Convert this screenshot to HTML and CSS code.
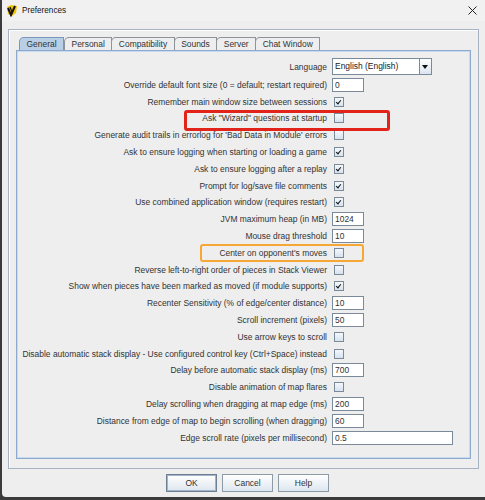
FILE: index.html
```html
<!DOCTYPE html>
<html lang="en">
<head>
    <meta charset="UTF-8">
    <title>Preferences</title>
    <link rel="stylesheet" href="styles.css">
</head>
<body>
    <div class="window">
        <div class="titlebar">
            <svg class="app-icon" width="12" height="13" viewBox="0 0 12 13">
                <path d="M1 3 L5 1 L11 2 L10 9 L6 12 L2 10 Z" fill="#f2c400"/>
                <path d="M2 4 L5 11 L9 2" fill="none" stroke="#111" stroke-width="2"/>
                <path d="M4 3 L6 8" stroke="#111" stroke-width="1.2"/>
            </svg>
            <span class="title">Preferences</span>
            <svg class="close" width="9" height="9" viewBox="0 0 9 9">
                <path d="M0.5 0.5 L8.5 8.5 M8.5 0.5 L0.5 8.5" stroke="#222" stroke-width="1"/>
            </svg>
        </div>

        <div class="dialog">
            <div class="etched">
                <div class="tabs">
                    <div class="tab selected">General</div>
                    <div class="tab">Personal</div>
                    <div class="tab">Compatibility</div>
                    <div class="tab">Sounds</div>
                    <div class="tab">Server</div>
                    <div class="tab">Chat Window</div>
                </div>
                <div class="tab-body">
                    <div class="prefs">
                        <label>Language</label>
                        <div class="combo">
                            <span class="combo-text">English (English)</span>
                            <span class="combo-arrow"></span>
                        </div>

                        <label>Override default font size (0 = default; restart required)</label>
                        <input type="text" class="field" value="0">

                        <label>Remember main window size between sessions</label>
                        <span class="check on"></span>

                        <label>Ask "Wizard" questions at startup</label>
                        <span class="check"></span>

                        <label>Generate audit trails in errorlog for 'Bad Data in Module' errors</label>
                        <span class="check"></span>

                        <label>Ask to ensure logging when starting or loading a game</label>
                        <span class="check on"></span>

                        <label>Ask to ensure logging after a replay</label>
                        <span class="check on"></span>

                        <label>Prompt for log/save file comments</label>
                        <span class="check on"></span>

                        <label>Use combined application window (requires restart)</label>
                        <span class="check on"></span>

                        <label>JVM maximum heap (in MB)</label>
                        <input type="text" class="field" value="1024">

                        <label>Mouse drag threshold</label>
                        <input type="text" class="field" value="10">

                        <label>Center on opponent's moves</label>
                        <span class="check"></span>

                        <label>Reverse left-to-right order of pieces in Stack Viewer</label>
                        <span class="check"></span>

                        <label>Show when pieces have been marked as moved (if module supports)</label>
                        <span class="check on"></span>

                        <label>Recenter Sensitivity (% of edge/center distance)</label>
                        <input type="text" class="field" value="10">

                        <label>Scroll increment (pixels)</label>
                        <input type="text" class="field" value="50">

                        <label>Use arrow keys to scroll</label>
                        <span class="check"></span>

                        <label>Disable automatic stack display - Use configured control key (Ctrl+Space) instead</label>
                        <span class="check"></span>

                        <label>Delay before automatic stack display (ms)</label>
                        <input type="text" class="field" value="700">

                        <label>Disable animation of map flares</label>
                        <span class="check"></span>

                        <label>Delay scrolling when dragging at map edge (ms)</label>
                        <input type="text" class="field" value="200">

                        <label>Distance from edge of map to begin scrolling (when dragging)</label>
                        <input type="text" class="field" value="60">

                        <label>Edge scroll rate (pixels per millisecond)</label>
                        <input type="text" class="field wide" value="0.5">
                    </div>

                    <!-- marker outlines drawn over the rows -->
                    <div class="mark mark-red"></div>
                    <div class="mark mark-orange"></div>
                </div>
            </div>

            <div class="buttons">
                <button class="btn default">OK</button>
                <button class="btn">Cancel</button>
                <button class="btn">Help</button>
            </div>
        </div>
    </div>
</body>
</html>
```

FILE: styles.css
```css
body {
    margin: 0;
    background-color: #3b3b3b;
    font-family: "Liberation Sans", Arial, sans-serif;
    font-size: 8.45px;
    color: #333;
}
.window {
    margin-left: 2px;
    width: 483px;
    height: 497px;
    background-color: #eeeeee;
    border-bottom-left-radius: 4px;
    overflow: hidden;
}
.titlebar {
    height: 21px;
    display: flex;
    align-items: center;
    background-color: #f1f1f1;
    padding-left: 4px;
}
.app-icon {
    margin-right: 4px;
}
.title {
    font-size: 8.2px;
    color: #111;
    flex: 1;
}
.close {
    margin-right: 8px;
}
.dialog {
    padding: 8px 6px 0 6px;
}
.etched {
    border: 1px solid #a7b3c2;
    box-shadow: inset 1px 1px 0 #fff;
    padding: 7px 7px 14px 7px;
    height: 417px;
}
.tabs {
    display: flex;
    margin-left: 3px;
    height: 13px;
}
.tab {
    border: 1px solid #8e9399;
    border-bottom: none;
    border-top-left-radius: 5px;
    padding: 0 6.5px;
    line-height: 12px;
    background-color: #eeeeee;
}
.tab + .tab {
    margin-left: -1px;
}
.tab.selected {
    background-color: #b8cfe5;
    border-color: #7b95bb;
    margin-right: 1px;
}
.tab-body {
    position: relative;
    border: 1px solid #8ea9cf;
    box-shadow: inset 0 0 0 1px #c9daee;
    height: 401px;
    padding: 6px 17px 0 0;
}
.prefs {
    display: grid;
    grid-template-columns: 1fr 121px;
    grid-template-rows: 19.5px;
    grid-auto-rows: 16.8px;
    column-gap: 5px;
    align-items: center;
}
.prefs label {
    text-align: right;
    white-space: nowrap;
}
.field {
    box-sizing: border-box;
    width: 32px;
    height: 14px;
    margin: 0;
    padding: 0 2px;
    border: 1px solid #7a8a99;
    background: #fff;
    font-family: inherit;
    font-size: 8.45px;
    color: #333;
}
.field.wide {
    width: 121px;
}
.check {
    box-sizing: border-box;
    width: 10px;
    height: 10px;
    margin-left: 2px;
    border: 1px solid #7a8a99;
    background: linear-gradient(#f4f8fc, #d6e2ef);
    position: relative;
}
.check.on::after {
    content: "";
    position: absolute;
    left: 2px;
    top: 1px;
    width: 2px;
    height: 4px;
    border: solid #111;
    border-width: 0 1.5px 1.5px 0;
    transform: rotate(40deg);
}
.combo {
    box-sizing: border-box;
    width: 100px;
    height: 17px;
    display: flex;
    border: 1px solid #7a8a99;
    background: #fff;
}
.combo-text {
    flex: 1;
    padding-left: 2px;
    line-height: 15px;
    color: #222;
}
.combo-arrow {
    width: 11px;
    border-left: 1px solid #7a8a99;
    background: linear-gradient(#fdfeff, #dbe5f0);
    position: relative;
}
.combo-arrow::after {
    content: "";
    position: absolute;
    left: 2px;
    top: 6px;
    border-left: 3.5px solid transparent;
    border-right: 3.5px solid transparent;
    border-top: 4px solid #111;
}
.mark {
    position: absolute;
    border-radius: 3px;
    box-sizing: border-box;
}
.mark-red {
    left: 167px;
    top: 59px;
    width: 206px;
    height: 21px;
    border: 3px solid #e2231a;
}
.mark-orange {
    left: 183px;
    top: 193px;
    width: 164px;
    height: 18px;
    border: 2.5px solid #f7a733;
}
.buttons {
    display: flex;
    justify-content: center;
    gap: 5px;
    margin-top: 5px;
    padding-left: 8px;
}
.btn {
    width: 51px;
    height: 18px;
    padding: 0;
    border: 1px solid #8d9aa8;
    background: linear-gradient(#ffffff, #dde6ef);
    font-family: inherit;
    font-size: 8.45px;
    color: #333;
}
.btn.default {
    border-color: #6d7f93;
    box-shadow: inset 0 0 0 1px #a4b4c6;
}
```
